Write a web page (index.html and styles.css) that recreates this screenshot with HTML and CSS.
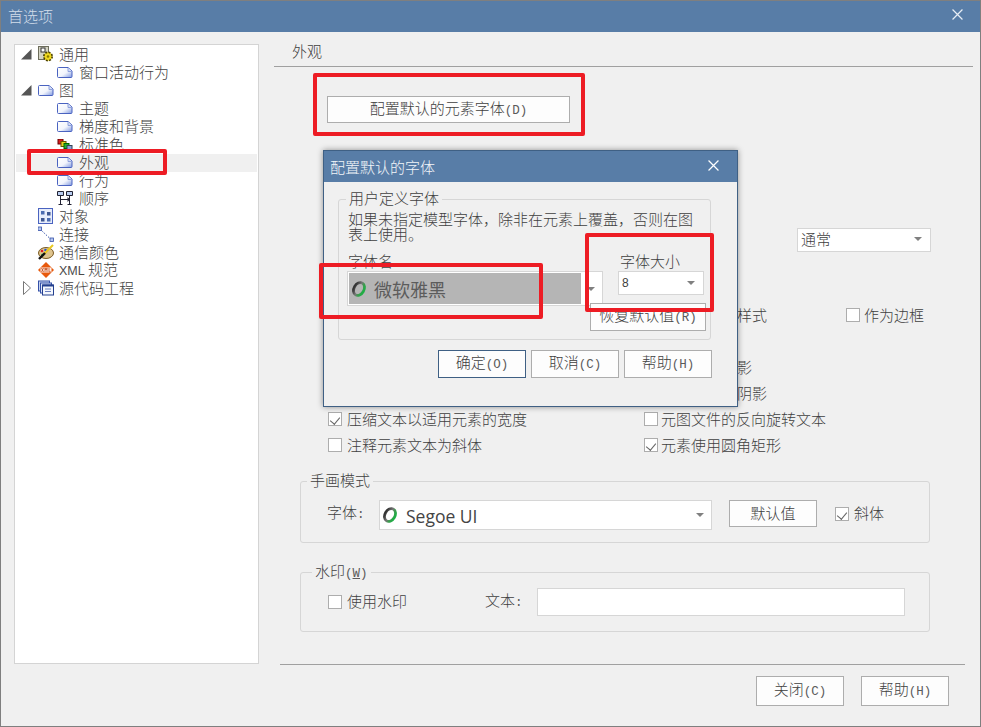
FILE: index.html
```html
<!DOCTYPE html>
<html lang="zh">
<head>
<meta charset="utf-8">
<title>首选项</title>
<link rel="stylesheet" href="styles.css">
</head>
<body>
<svg class="defs" aria-hidden="true">
  <defs>
    <linearGradient id="docfill" x1="0" y1="0" x2="1" y2="1">
      <stop offset="0" stop-color="#ffffff"/><stop offset=".55" stop-color="#f2f5fc"/><stop offset="1" stop-color="#7f98e0"/>
    </linearGradient>
    <linearGradient id="oring" x1="0" y1="0" x2="1" y2="0">
      <stop offset="0" stop-color="#333"/><stop offset=".45" stop-color="#777"/><stop offset=".7" stop-color="#3f9a50"/><stop offset="1" stop-color="#1fae45"/>
    </linearGradient>
    <symbol id="doc" viewBox="0 0 16 11">
      <path d="M.5 1.500a1 1 0 0 1 1-1h9.500l4 3.500v5.500a1 1 0 0 1-1 1h-12.500a1 1 0 0 1-1-1z" fill="url(#docfill)" stroke="#4a63c0"/>
      <path d="M11 1v3.500h4" fill="#d5def6" stroke="#8fa2de"/>
    </symbol>
    <symbol id="o" viewBox="0 0 16 18">
      <ellipse cx="8" cy="9" rx="5" ry="6.800" transform="rotate(30 8 9)" fill="none" stroke="url(#oring)" stroke-width="2.800"/>
    </symbol>
  </defs>
</svg>

<div class="window">
  <div class="titlebar">
    <span class="title-text">首选项</span>
    <svg class="x" viewBox="0 0 10 10"><path d="M.5.5l9 9M9.500.5l-9 9" stroke="#e8eef5" stroke-width="1.100"/></svg>
  </div>

  <div class="main">
    <div class="tree">
      <div class="row l0"><svg class="exp" viewBox="0 0 11 11"><path d="M0 10.500L10.500 0v10.500z" fill="#555"/></svg>
        <svg class="ic" viewBox="0 0 16 16"><rect x=".5" y=".5" width="10" height="13" fill="#d4d4c4" stroke="#6d6d5c"/><rect x="3" y="2" width="4" height="4" fill="#fff" stroke="#333"/><circle cx="10" cy="10.500" r="4.200" fill="#efd820" stroke="#4a4000" stroke-width="1.600" stroke-dasharray="2 1.300"/><circle cx="10" cy="10.500" r="1.300" fill="#8a7a00"/></svg>
        <span class="lb">通用</span></div>
      <div class="row l1"><svg class="ic2"><use href="#doc"/></svg><span class="lb">窗口活动行为</span></div>
      <div class="row l0"><svg class="exp" viewBox="0 0 11 11"><path d="M0 10.500L10.500 0v10.500z" fill="#555"/></svg>
        <svg class="ic2"><use href="#doc"/></svg><span class="lb">图</span></div>
      <div class="row l1"><svg class="ic2"><use href="#doc"/></svg><span class="lb">主题</span></div>
      <div class="row l1"><svg class="ic2"><use href="#doc"/></svg><span class="lb">梯度和背景</span></div>
      <div class="row l1"><svg class="ic2" viewBox="0 0 16 11"><rect x="1" y="0" width="5" height="5" fill="#d81e1e" stroke="#600"/><rect x="4" y="2.500" width="5" height="5" fill="#e8d020" stroke="#650"/><rect x="7" y="4.500" width="5" height="5" fill="#22b030" stroke="#060"/><rect x="10" y="6.500" width="5" height="4" fill="#8aa0d8" stroke="#345"/></svg><span class="lb">标准色</span></div>
      <div class="row l1 sel"><svg class="ic2"><use href="#doc"/></svg><span class="lb">外观</span></div>
      <div class="row l1"><svg class="ic2"><use href="#doc"/></svg><span class="lb">行为</span></div>
      <div class="row l1"><svg class="ic3" viewBox="0 0 16 14"><path d="M.5.500h6v4h-6zM9.500.500h6v4h-6z" fill="#b8cdf0" stroke="#223"/><path d="M3.500 4.500v9M12.500 4.500v9M1.500 13.500h4M10.500 13.500h4M3.500 8.500h8" stroke="#223" fill="none"/><path d="M10.500 6v5l2.500-2.500z" fill="#223"/></svg><span class="lb">顺序</span></div>
      <div class="row l0n"><svg class="ic" viewBox="0 0 16 16"><rect x=".5" y=".5" width="14" height="15" fill="#e6ecfa" stroke="#4a63c0"/><rect x="3" y="3" width="3.500" height="3.500" fill="#4a6bb0"/><rect x="9" y="4" width="3.500" height="3.500" fill="#3c5590"/><rect x="3" y="10" width="3.500" height="3.500" fill="#3c5590"/><rect x="9" y="10" width="3.500" height="3.500" fill="#4a6bb0"/></svg><span class="lb">对象</span></div>
      <div class="row l0n"><svg class="ic" viewBox="0 0 16 16"><rect x="0" y="1" width="3.500" height="3.500" fill="#b8c8f0" stroke="#3450a8" stroke-width=".8"/><rect x="12" y="12" width="3.500" height="3.500" fill="#b8c8f0" stroke="#3450a8" stroke-width=".8"/><path d="M3.500 4.500L12 12.500" stroke="#3450a8" stroke-dasharray="1.500 1.500"/></svg><span class="lb">连接</span></div>
      <div class="row l0n"><svg class="ic" viewBox="0 0 16 16"><ellipse cx="8" cy="9" rx="7.500" ry="5.500" fill="#dfc48e" stroke="#7a5a22"/><circle cx="4" cy="7" r="1.300" fill="#d22"/><circle cx="7.500" cy="6" r="1.300" fill="#25c"/><circle cx="4.500" cy="11" r="1.300" fill="#2a3"/><path d="M15 1L6 10" stroke="#e8c820" stroke-width="2"/><path d="M7 9l-6 6" stroke="#111" stroke-width="2.400"/></svg><span class="lb">通信颜色</span></div>
      <div class="row l0n"><svg class="ic" viewBox="0 0 16 16"><path d="M8 0l8 8-8 8-8-8z" fill="#e8590c"/><rect x="2.500" y="5.500" width="11" height="5" fill="#fff" opacity=".92"/><path d="M3.500 6l2 4M5.500 6l-2 4M7 10V6l1 2 1-2v4M11 6v4h2" stroke="#c2410c" stroke-width=".8" fill="none"/></svg><span class="lb"><span class="xml">XML</span> 规范</span></div>
      <div class="row l0o"><svg class="exp2" viewBox="0 0 8 14"><path d="M.5.500l7 6.500-7 6.500z" fill="#fff" stroke="#777"/></svg>
        <svg class="ic" viewBox="0 0 16 16"><rect x=".5" y="1" width="11" height="10" fill="#c6d4f0" stroke="#3450a8"/><rect x="2.500" y="3" width="11" height="10" fill="#dfe7f8" stroke="#3450a8"/><rect x="4.500" y="5" width="11" height="10" fill="#f4f7fd" stroke="#24408f"/><path d="M4.500 5.500h11" stroke="#24408f" stroke-width="2"/><path d="M7 9h6M7 11.500h6" stroke="#6b80c0"/></svg><span class="lb">源代码工程</span></div>
    </div>

    <div class="panel">
      <div class="panel-head">外观</div>
      <div class="btn btn-font"><span>配置默认的元素字体<span class="m">(D)</span></span></div>
      <div class="combo combo-normal"><span>通常</span><i class="arrow"></i></div>

      <div class="opts">
        <div class="opt"></div>
        <div class="opt opt-top"><span class="peek">样式</span><span class="box boxed-edge"></span><span>作为边框</span></div>
        <div class="opt"></div>
        <div class="opt"></div>
        <div class="opt"></div>
        <div class="opt"><span class="peek">影</span></div>
        <div class="opt"></div>
        <div class="opt"><span class="peek">阴影</span></div>
        <div class="opt"><span class="box on"></span><span>压缩文本以适用元素的宽度</span></div>
        <div class="opt right"><span class="box"></span><span>元图文件的反向旋转文本</span></div>
        <div class="opt"><span class="box"></span><span>注释元素文本为斜体</span></div>
        <div class="opt right"><span class="box on"></span><span>元素使用圆角矩形</span></div>
      </div>

      <div class="group group-hand">
        <div class="legend">手画模式</div>
        <div class="hand-row">
          <span class="field-label hand-label">字体<span class="m">:</span></span>
          <div class="combo combo-hand"><span class="font-name"><svg class="o"><use href="#o"/></svg><span class="seg">Segoe UI</span></span><i class="arrow"></i></div>
          <div class="btn btn-default">默认值</div>
          <span class="box box-italic on"></span><span class="field-label">斜体</span>
        </div>
      </div>

      <div class="group group-mark">
        <div class="legend legend-mark">水印<span class="m">(<u>W</u>)</span></div>
        <div class="mark-row">
          <span class="box box-mark"></span><span class="field-label mark-label">使用水印</span>
          <span class="field-label text-label">文本<span class="m">:</span></span>
          <div class="input"></div>
        </div>
      </div>

      <div class="foot-line"></div>
      <div class="foot">
        <div class="btn btn-foot"><span>关闭<span class="m">(C)</span></span></div>
        <div class="btn btn-foot"><span>帮助<span class="m">(H)</span></span></div>
      </div>
    </div>
  </div>

  <div class="dialog">
    <div class="dlg-title">
      <span>配置默认的字体</span>
      <svg class="x" viewBox="0 0 10 10"><path d="M.5.5l9 9M9.500.5l-9 9" stroke="#fff" stroke-width="1.100"/></svg>
    </div>
    <div class="group dlg-group">
      <div class="legend legend-user">用户定义字体</div>
      <div class="desc">如果未指定模型字体，除非在元素上覆盖，否则在图表上使用。</div>
      <div class="dlg-cols">
        <div class="col-name">
          <div class="col-label">字体名</div>
          <div class="combo combo-name">
            <span class="name-sel"><svg class="o"><use href="#o"/></svg><span class="yahei">微软雅黑</span></span><i class="arrow"></i>
          </div>
        </div>
        <div class="col-size">
          <div class="col-label size-label">字体大小</div>
          <div class="combo combo-size"><span class="num">8</span><i class="arrow"></i></div>
          <div class="btn btn-restore"><span>恢复默认值<span class="m">(R)</span></span></div>
        </div>
      </div>
    </div>
    <div class="dlg-btns">
      <div class="btn btn-dlg primary"><span>确定<span class="m">(O)</span></span></div>
      <div class="btn btn-dlg"><span>取消<span class="m">(C)</span></span></div>
      <div class="btn btn-dlg"><span>帮助<span class="m">(H)</span></span></div>
    </div>
  </div>

  <div class="mark mark-tree"></div>
  <div class="mark mark-btn"></div>
  <div class="mark mark-name"></div>
  <div class="mark mark-size"></div>
</div>
</body>
</html>
```

FILE: styles.css
```css
* { box-sizing: border-box; }
html, body { margin: 0; padding: 0; background: #f0f0f0; }
body {
  font-family: "Noto Sans CJK SC", "Liberation Sans", sans-serif;
  font-size: 15px;
  font-weight: 300;
  line-height: 16px;
  color: #3f3f3f;
}
.defs { position: absolute; width: 0; height: 0; }
.m { font-family: "Liberation Mono", monospace; font-size: 12.5px; font-weight: 400; color: #5a5a5a; line-height: 1; }

.window {
  position: relative;
  width: 981px;
  height: 727px;
  border: 1px solid #7f7f7f;
  background: #f0f0f0;
  overflow: hidden;
}
.titlebar {
  height: 31px;
  background: #587da7;
  color: #d3deea;
  display: flex;
  align-items: center;
  justify-content: space-between;
  padding: 0 17px 2px 7px;
}
.x { width: 11px; height: 11px; margin-bottom: 3px; }

.main { display: flex; padding: 12px 0 0 13px; }
.tree {
  width: 245px;
  height: 620px;
  padding-top: 1px;
  background: #fff;
  border: 1px solid #d4d4d4;
  flex: none;
}
.row { height: 18px; display: flex; align-items: center; padding-bottom: 2px; }
.l0 { padding-left: 6px; }
.l0n { padding-left: 23px; }
.l0o { padding-left: 8px; }
.l1 { padding-left: 42px; }
.sel { background: #f0f0f0; margin: 0 1px; padding-left: 41px; }
.exp { width: 11px; height: 11px; margin-right: 6px; flex: none; }
.exp2 { width: 8px; height: 14px; margin-right: 7px; flex: none; }
.ic { width: 16px; height: 16px; flex: none; }
.ic2 { width: 16px; height: 11px; flex: none; }
.ic3 { width: 16px; height: 14px; flex: none; }
.lb { margin-left: 5px; white-space: nowrap; }
.l1 .lb { margin-left: 6px; }
.xml { font-family: "Liberation Sans", sans-serif; font-size: 12.5px; font-weight: 400; color: #4a4a4a; }

.panel { width: 699px; margin-left: 15px; flex: none; }
.panel-head { height: 23px; line-height: 14px; padding-left: 18px; border-bottom: 1px solid #a0a0a0; }

.btn {
  display: flex;
  align-items: center;
  justify-content: center;
  background: #fdfdfd;
  border: 1px solid #adadad;
  padding-bottom: 2px;
  white-space: nowrap;
}
.btn-font { width: 243px; height: 27px; margin: 29px 0 0 53px; }

.combo {
  display: flex;
  align-items: center;
  justify-content: space-between;
  background: #fff;
  border: 1px solid #d6d6d6;
}
.arrow {
  width: 0;
  height: 0;
  border-left: 4px solid transparent;
  border-right: 4px solid transparent;
  border-top: 4px solid #808080;
  flex: none;
}
.combo-normal { width: 134px; height: 24px; margin: 105px 0 0 523px; padding: 0 8px 2px 3px; }

.opts {
  display: grid;
  grid-template-columns: 316px 1fr;
  grid-auto-rows: 26px;
  margin: 51px 0 0 54px;
  width: 620px;
}
.opt { display: flex; align-items: center; white-space: nowrap; padding-bottom: 2px; }
.peek { margin-left: 93px; }
.opt-top { grid-column: 2; grid-row: 1; }
.right .box { margin-right: 3px; }
.box {
  width: 14px;
  height: 14px;
  flex: none;
  margin-right: 5px;
  background: #fff;
  border: 1px solid #adadad;
  position: relative;
}
.box.on::after {
  content: "";
  position: absolute;
  left: 3px;
  top: 1.500px;
  width: 5px;
  height: 8px;
  border-right: 1.200px solid #666;
  border-bottom: 1.200px solid #666;
  transform: rotate(40deg);
}
.boxed-edge { margin-left: 79px; margin-right: 4px; }

.group {
  border: 1px solid #d6d6d6;
  border-radius: 3px;
}
.legend {
  width: fit-content;
  height: 16px;
  line-height: 14px;
  background: #f0f0f0;
  padding: 0 3px;
  margin: -9px 0 0 6px;
  white-space: nowrap;
}
.legend-user { margin-left: 7px; }
.group-hand { width: 630px; height: 62px; margin: 22px 0 0 26px; }
.hand-row { display: flex; align-items: flex-start; margin-top: 11px; padding-left: 26px; }
.field-label { white-space: nowrap; }
.hand-label { width: 52px; margin-top: 4px; }
.combo-hand { width: 333px; height: 30px; padding: 0 7px 0 2px; }
.font-name, .name-sel { display: flex; align-items: center; }
.o { width: 16px; height: 18px; flex: none; }
.seg { font-family: "Open Sans", sans-serif; font-size: 17.5px; font-weight: 400; margin: 2px 0 0 8px; color: #444; }
.btn-default { width: 88px; height: 27px; margin-left: 17px; }
.box-italic { margin: 7px 5px 0 18px; }
.box-italic + .field-label { margin-top: 5px; }

.group-mark { width: 630px; height: 60px; margin: 29px 0 0 26px; }
.legend-mark { margin-left: 11px; }
.mark-row { display: flex; align-items: flex-start; margin-top: 8px; padding-left: 27px; }
.box-mark { margin-top: 7px; }
.mark-label { margin-top: 5px; }
.text-label { margin: 4px 0 0 78px; width: 52px; }
.input { width: 368px; height: 28px; background: #fff; border: 1px solid #d6d6d6; }

.foot-line { width: 685px; height: 1px; margin: 32px 0 0 6px; background: #a0a0a0; }
.foot { display: flex; gap: 17px; justify-content: flex-end; margin-top: 11px; padding-right: 24px; }
.btn-foot { width: 88px; height: 30px; }

.dialog {
  position: absolute;
  left: 322px;
  top: 149px;
  width: 415px;
  height: 257px;
  background: #f0f0f0;
  border: 1px solid #3f6084;
  box-shadow: 0 0 6px rgba(0, 0, 0, .4);
}
.dlg-title {
  height: 31px;
  background: #587da7;
  color: #f2f5f9;
  display: flex;
  align-items: center;
  justify-content: space-between;
  padding: 0 18px 0 6px;
}
.dlg-group { width: 373px; height: 141px; margin: 17px 0 0 14px; }
.desc { width: 346px; line-height: 15px; margin: 4px 0 0 9px; }
.dlg-cols { display: flex; align-items: flex-start; margin: 12px 0 0 8px; }
.col-name { width: 256px; flex: none; }
.col-label { height: 16px; }
.col-name .col-label { margin-left: 1px; }
.combo-name { height: 35px; margin-top: 2px; padding: 1px 7px 1px 1px; }
.name-sel { width: 232px; height: 31px; background: #b5b5b5; padding-left: 2px; }
.yahei { font-size: 18px; font-weight: 400; margin-left: 7px; color: #5c5c5c; }
.col-size { width: 116px; margin-left: -13px; flex: none; }
.size-label { margin-left: 30px; }
.combo-size { width: 86px; height: 24px; margin: 2px 0 0 28px; padding: 0 8px 0 3px; }
.num { font-family: "Liberation Sans", sans-serif; font-size: 12px; font-weight: 400; }
.btn-restore { width: 116px; height: 28px; margin-top: 8px; }
.dlg-btns { display: flex; gap: 5px; margin: 10px 0 0 114px; }
.btn-dlg { width: 88px; height: 28px; }
.primary { border-color: #3f6084; }

.mark {
  position: absolute;
  border: 4px solid #ed1c24;
  border-radius: 2px;
}
.mark-tree { left: 26px; top: 148px; width: 140px; height: 26px; }
.mark-btn { left: 312px; top: 72px; width: 272px; height: 63px; }
.mark-name { left: 318px; top: 262px; width: 224px; height: 56px; }
.mark-size { left: 584px; top: 232px; width: 129px; height: 79px; }
```
